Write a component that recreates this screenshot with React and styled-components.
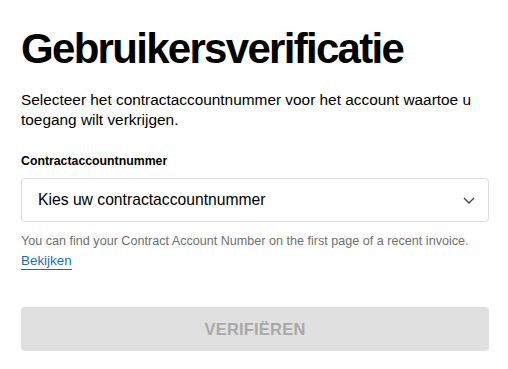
import React from "react";
import styled, { createGlobalStyle } from "styled-components";

const Global = createGlobalStyle`
  html, body { margin: 0; padding: 0; background: #fff; }
  body { font-family: "Liberation Sans", Arial, sans-serif; color: #000; }
`;

const Page = styled.main`
  width: 468px;
  padding: 25px 19px 0 21px;
  display: flex;
  flex-direction: column;
`;

const Title = styled.h1`
  margin: 0;
  font-size: 42px;
  line-height: 48px;
  font-weight: 700;
  letter-spacing: -1.7px;
`;

const Intro = styled.p`
  margin: 17px 0 0;
  font-size: 15.4px;
  line-height: 20px;
  color: #000;
`;

const Label = styled.label`
  margin-top: 23px;
  font-size: 12.3px;
  line-height: 16px;
  font-weight: 700;
`;

const Select = styled.div`
  margin-top: 9px;
  height: 42px;
  border: 1px solid #dcdcdc;
  border-radius: 4px;
  display: flex;
  align-items: center;
  justify-content: space-between;
  padding: 0 13px 0 16px;
  font-size: 15.7px;
`;

const Helper = styled.p`
  margin: 9px 0 0;
  font-size: 12.6px;
  line-height: 20px;
  color: #6f6f6f;
`;

const Link = styled.a`
  display: inline-block;
  color: #1b6fb0;
  text-decoration: none;
  border-bottom: 1.5px solid #1b6fb0;
  line-height: 17px;
  font-size: 13.4px;
`;

const Button = styled.button`
  margin-top: 36px;
  height: 44px;
  width: 100%;
  border: none;
  border-radius: 4px;
  background: #e0e0e0;
  color: #a9a9a9;
  font-family: "Liberation Sans", Arial, sans-serif;
  font-weight: 700;
  font-size: 16.5px;
  letter-spacing: 0.2px;
`;

const Chevron = () => (
  <svg width="12" height="7" viewBox="0 0 12 7" fill="none">
    <path d="M1 1l5 5 5-5" stroke="#444" strokeWidth="1.4" />
  </svg>
);

export default function App() {
  return (
    <>
      <Global />
      <Page>
        <Title>Gebruikersverificatie</Title>
        <Intro>
          Selecteer het contractaccountnummer voor het account waartoe u
          toegang wilt verkrijgen.
        </Intro>
        <Label>Contractaccountnummer</Label>
        <Select>
          <span>Kies uw contractaccountnummer</span>
          <Chevron />
        </Select>
        <Helper>
          You can find your Contract Account Number on the first page of a recent invoice.
          <br />
          <Link href="#">Bekijken</Link>
        </Helper>
        <Button disabled>VERIFIËREN</Button>
      </Page>
    </>
  );
}
